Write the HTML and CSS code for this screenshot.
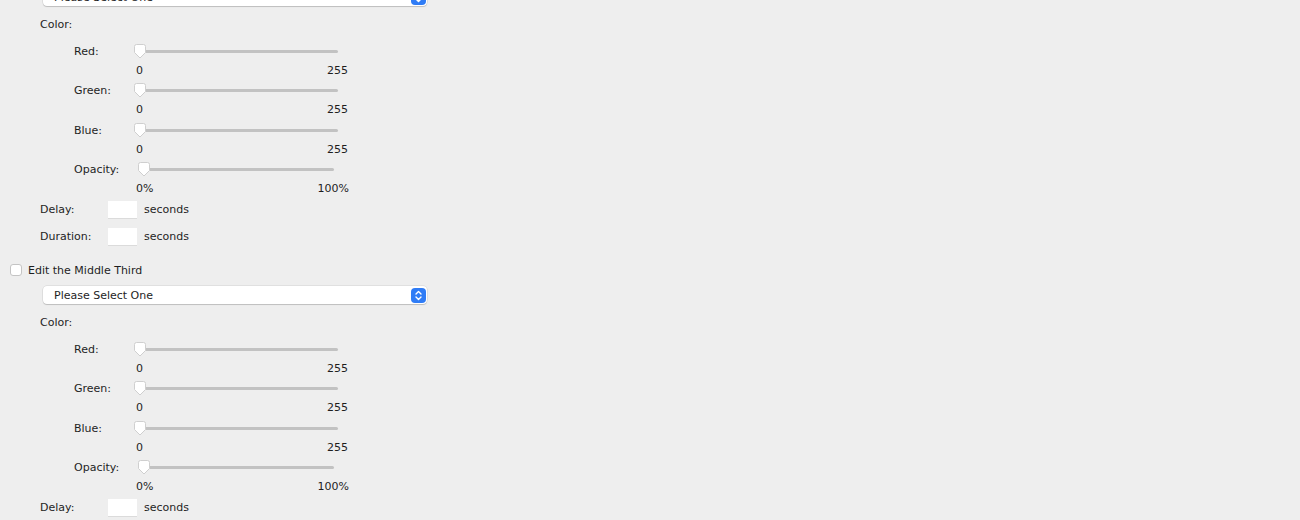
FILE: index.html
```html
<!DOCTYPE html>
<html lang="en">
<head>
    <meta charset="utf-8">
    <title>Edit Thirds</title>
    <link rel="stylesheet" href="styles.css">
</head>
<body>
<div class="panel">
    <div class="section">
        <div class="check-row">
            <span class="checkbox"></span>
            <span>Edit the First Third</span>
        </div>
        <div class="select">
            <span>Please Select One</span>
            <span class="select-btn">
                <svg width="9" height="11" viewBox="0 0 9 11"><path d="M2 4 L4.5 1.5 L7 4 M2 7 L4.5 9.5 L7 7" fill="none" stroke="#fff" stroke-width="1.4" stroke-linecap="round" stroke-linejoin="round"/></svg>
            </span>
        </div>
        <div class="color-label">Color:</div>
        <div class="sliders">
            <div class="slider-row">
                <div class="slider-label">Red:</div>
                <div class="slider-col">
                    <div class="slider"><span class="track"></span><span class="thumb"></span></div>
                    <div class="range"><span>0</span><span>255</span></div>
                </div>
            </div>
            <div class="slider-row">
                <div class="slider-label">Green:</div>
                <div class="slider-col">
                    <div class="slider"><span class="track"></span><span class="thumb"></span></div>
                    <div class="range"><span>0</span><span>255</span></div>
                </div>
            </div>
            <div class="slider-row">
                <div class="slider-label">Blue:</div>
                <div class="slider-col">
                    <div class="slider"><span class="track"></span><span class="thumb"></span></div>
                    <div class="range"><span>0</span><span>255</span></div>
                </div>
            </div>
            <div class="slider-row">
                <div class="slider-label">Opacity:</div>
                <div class="slider-col opacity">
                    <div class="slider"><span class="track"></span><span class="thumb"></span></div>
                    <div class="range"><span>0%</span><span>100%</span></div>
                </div>
            </div>
        </div>
        <div class="time-row">
            <span class="time-label">Delay:</span>
            <span class="field"></span>
            <span>seconds</span>
        </div>
        <div class="time-row">
            <span class="time-label">Duration:</span>
            <span class="field"></span>
            <span>seconds</span>
        </div>
    </div>

    <div class="section">
        <div class="check-row">
            <span class="checkbox"></span>
            <span>Edit the Middle Third</span>
        </div>
        <div class="select">
            <span>Please Select One</span>
            <span class="select-btn">
                <svg width="9" height="11" viewBox="0 0 9 11"><path d="M2 4 L4.5 1.5 L7 4 M2 7 L4.5 9.5 L7 7" fill="none" stroke="#fff" stroke-width="1.4" stroke-linecap="round" stroke-linejoin="round"/></svg>
            </span>
        </div>
        <div class="color-label">Color:</div>
        <div class="sliders">
            <div class="slider-row">
                <div class="slider-label">Red:</div>
                <div class="slider-col">
                    <div class="slider"><span class="track"></span><span class="thumb"></span></div>
                    <div class="range"><span>0</span><span>255</span></div>
                </div>
            </div>
            <div class="slider-row">
                <div class="slider-label">Green:</div>
                <div class="slider-col">
                    <div class="slider"><span class="track"></span><span class="thumb"></span></div>
                    <div class="range"><span>0</span><span>255</span></div>
                </div>
            </div>
            <div class="slider-row">
                <div class="slider-label">Blue:</div>
                <div class="slider-col">
                    <div class="slider"><span class="track"></span><span class="thumb"></span></div>
                    <div class="range"><span>0</span><span>255</span></div>
                </div>
            </div>
            <div class="slider-row">
                <div class="slider-label">Opacity:</div>
                <div class="slider-col opacity">
                    <div class="slider"><span class="track"></span><span class="thumb"></span></div>
                    <div class="range"><span>0%</span><span>100%</span></div>
                </div>
            </div>
        </div>
        <div class="time-row">
            <span class="time-label">Delay:</span>
            <span class="field"></span>
            <span>seconds</span>
        </div>
        <div class="time-row">
            <span class="time-label">Duration:</span>
            <span class="field"></span>
            <span>seconds</span>
        </div>
    </div>
</div>
</body>
</html>
```

FILE: styles.css
```css
body {
    margin: 0;
    background-color: #eeeeee;
    font-family: "DejaVu Sans", sans-serif;
    font-size: 11px;
    color: #1e1e1e;
    overflow: hidden;
}

.panel {
    margin-top: -40px;
}

.section {
    padding-bottom: 11px;
}

.check-row {
    display: flex;
    align-items: center;
    gap: 6px;
    height: 24px;
    padding-left: 10px;
}

.checkbox {
    width: 12px;
    height: 12px;
    box-sizing: border-box;
    border: 1px solid #c4c4c4;
    border-radius: 3px;
    background-color: #fff;
}

.select {
    display: flex;
    align-items: center;
    justify-content: space-between;
    width: 384px;
    height: 18px;
    box-sizing: border-box;
    margin: 4px 0 0 43px;
    padding: 0 1px 0 11px;
    background-color: #fff;
    border-radius: 4px;
    box-shadow: 0 0 0 0.5px rgba(0, 0, 0, 0.12), 0 1px 1px rgba(0, 0, 0, 0.15);
}

.select-btn {
    display: flex;
    align-items: center;
    justify-content: center;
    width: 15px;
    height: 15px;
    background-color: #2f7cf6;
    border-radius: 4px;
}

.color-label {
    height: 24px;
    line-height: 24px;
    margin-top: 7px;
    padding-left: 40px;
}

.sliders {
    margin-top: 4px;
    padding-left: 68px;
}

.slider-row {
    display: flex;
    height: 39.3px;
}

.slider-label {
    width: 62px;
    height: 21px;
    line-height: 21px;
    box-sizing: border-box;
    padding-left: 6px;
}

.slider-col {
    width: 220px;
}

.slider {
    position: relative;
    height: 20px;
}

.track {
    position: absolute;
    left: 9px;
    top: 9px;
    width: 199px;
    height: 3px;
    border-radius: 2px;
    background-color: #c2c2c2;
}

.thumb {
    position: absolute;
    left: 3px;
    top: 3px;
    width: 14px;
    height: 15px;
    background: url("data:image/svg+xml,%3Csvg xmlns='http://www.w3.org/2000/svg' width='14' height='15' viewBox='0 0 14 15'%3E%3Cpath d='M1.5 2.5 Q1.5 0.5 3.5 0.5 H10.5 Q12.5 0.5 12.5 2.5 V8.5 L7 14 L1.5 8.5 Z' fill='%23fff' stroke='%23cfcfcf'/%3E%3C/svg%3E") no-repeat;
}

.opacity .track {
    left: 13px;
    width: 191px;
}

.opacity .thumb {
    left: 7px;
}

.range {
    display: flex;
    justify-content: space-between;
    width: 212px;
    height: 17px;
    line-height: 19px;
    padding-left: 6px;
}

.opacity .range {
    width: 213px;
}

.time-row {
    display: flex;
    align-items: center;
    height: 22px;
    padding-left: 40px;
}

.time-row + .time-row {
    margin-top: 5px;
}

.time-label {
    width: 68px;
}

.field {
    width: 29px;
    height: 17px;
    margin-right: 7px;
    background-color: #fff;
    box-shadow: 0 1px 0 rgba(0, 0, 0, 0.08);
}
```
